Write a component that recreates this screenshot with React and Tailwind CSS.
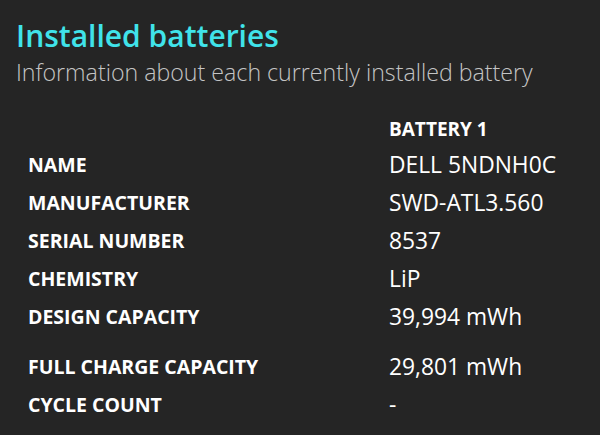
import React from "react";

const rows = [
  { label: "NAME", value: "DELL 5NDNH0C" },
  { label: "MANUFACTURER", value: "SWD-ATL3.560" },
  { label: "SERIAL NUMBER", value: "8537" },
  { label: "CHEMISTRY", value: "LiP" },
  { label: "DESIGN CAPACITY", value: "39,994 mWh", gap: true },
  { label: "FULL CHARGE CAPACITY", value: "29,801 mWh" },
  { label: "CYCLE COUNT", value: "-" },
];

export default function App() {
  return (
    <div className="w-[600px] h-[435px] bg-[#252525] overflow-hidden font-['Open_Sans',sans-serif]">
      {/* Header */}
      <div className="pl-[16px] pt-[16px]">
        <h1 className="text-[30px] leading-[40px] font-semibold text-[#40e3ea]">
          Installed batteries
        </h1>
        <p className="text-[23.2px] leading-[32px] font-light text-[#c4c4c4] whitespace-nowrap">
          Information about each currently installed battery
        </p>
      </div>

      {/* Table */}
      <div className="grid grid-cols-[361px_1fr] pl-[28px] pt-[24px]">
        <div />
        <div className="text-[19px] leading-[34px] font-bold text-white">BATTERY 1</div>
        {rows.map((r) => (
          <React.Fragment key={r.label}>
            <div
              className={`text-[19.5px] font-bold text-white flex items-center h-[38px] ${
                r.gap ? "mb-[12px]" : ""
              }`}
            >
              {r.label}
            </div>
            <div
              className={`text-[22.8px] text-white flex items-center h-[38px] ${
                r.gap ? "mb-[12px]" : ""
              }`}
            >
              {r.value}
            </div>
          </React.Fragment>
        ))}
      </div>
    </div>
  );
}
